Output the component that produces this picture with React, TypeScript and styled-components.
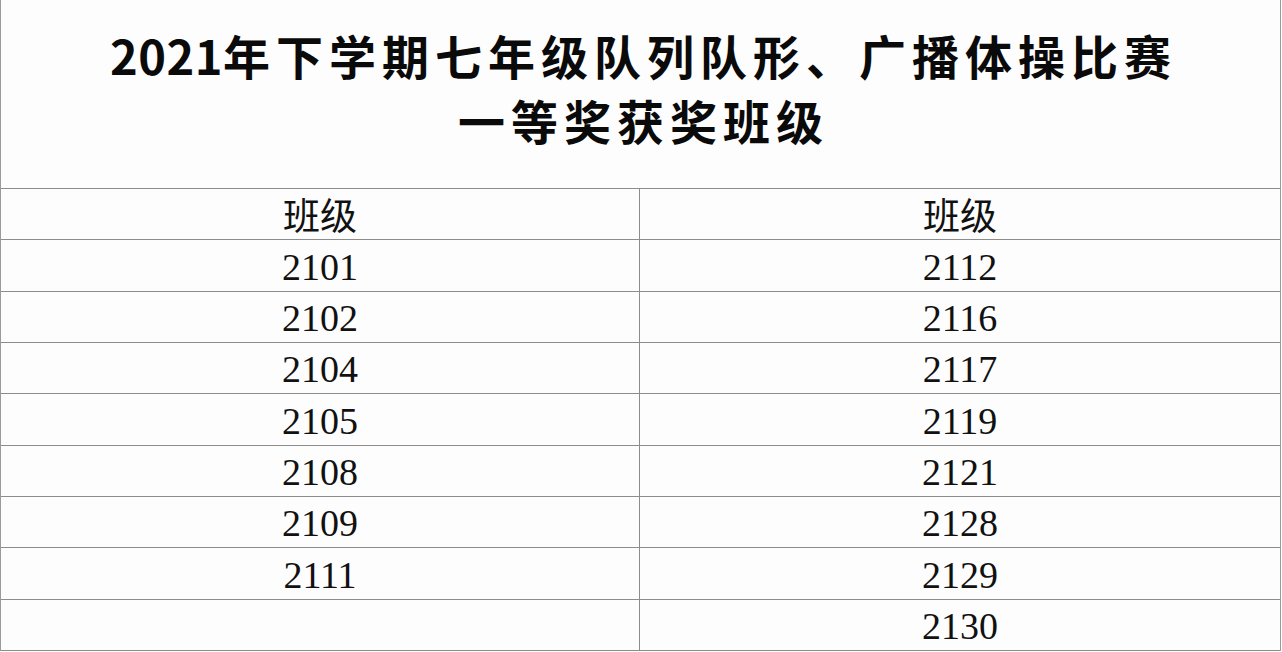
import React from 'react';
import styled, { createGlobalStyle } from 'styled-components';

const GlobalStyle = createGlobalStyle`
  html, body {
    margin: 0;
    padding: 0;
    background: #fdfdfd;
  }
`;

const Sheet = styled.div`
  width: 1281px;
  box-sizing: border-box;
  border-left: 1px solid #9a9a9a;
  border-right: 1px solid #9a9a9a;
  background: #fdfdfd;
`;

const Header = styled.div`
  height: 188px;
  box-sizing: border-box;
  padding-top: 22px;
  display: flex;
  flex-direction: column;
  align-items: center;
`;

const TitleLine = styled.div`
  font-family: 'Noto Sans CJK SC', 'Noto Sans', sans-serif;
  font-weight: 700;
  font-size: 47px;
  line-height: 65px;
  letter-spacing: 6px;
  color: #0a0a0a;
  white-space: nowrap;
  margin-right: -6px;
`;

const Digits = styled.span`
  letter-spacing: 0.5px;
`;

const Table = styled.div`
  display: grid;
  grid-template-columns: 639px 1fr;
  grid-auto-rows: 51.35px;
  border-top: 1px solid #8c8c8c;
`;

const Cell = styled.div<{ $left?: boolean }>`
  box-sizing: border-box;
  border-bottom: 1px solid #8c8c8c;
  border-right: ${p => (p.$left ? '1px solid #8c8c8c' : 'none')};
  display: flex;
  align-items: center;
  justify-content: center;
  font-family: 'Liberation Serif', 'Noto Sans CJK SC', serif;
  font-size: 38px;
  color: #111;
  padding-top: 2px;
`;

const HeadCell = styled(Cell)`
  font-family: 'Noto Sans CJK SC', serif;
  font-weight: 400;
  font-size: 37px;
  padding-top: 0;
`;

const left = ['2101', '2102', '2104', '2105', '2108', '2109', '2111', ''];
const right = ['2112', '2116', '2117', '2119', '2121', '2128', '2129', '2130'];

export default function App() {
  return (
    <>
      <GlobalStyle />
      <Sheet>
        <Header>
          <TitleLine>
            <Digits>2021</Digits>年下学期七年级队列队形、广播体操比赛
          </TitleLine>
          <TitleLine>一等奖获奖班级</TitleLine>
        </Header>
        <Table>
          <HeadCell $left>班级</HeadCell>
          <HeadCell>班级</HeadCell>
          {left.map((l, i) => (
            <React.Fragment key={i}>
              <Cell $left>{l}</Cell>
              <Cell>{right[i]}</Cell>
            </React.Fragment>
          ))}
        </Table>
      </Sheet>
    </>
  );
}
